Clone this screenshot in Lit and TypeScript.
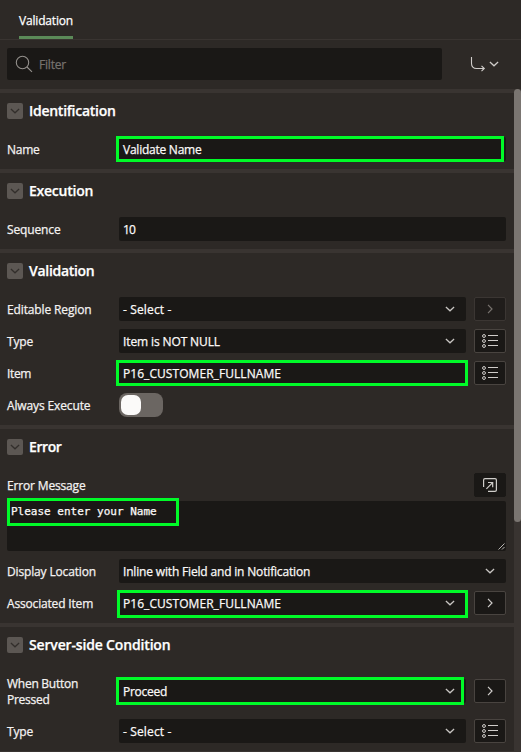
import { LitElement, html, css, svg, nothing } from "lit";
import { customElement, property } from "lit/decorators.js";
import { classMap } from "lit/directives/class-map.js";

type Kind = "input" | "select";
type Action = "go" | "list";

interface Field {
  label: string[];
  value?: string;
  kind?: Kind;
  action?: Action;
  disabled?: boolean;
  toggle?: boolean;
  mark?: string;
}

interface Group {
  title: string;
  fields: Field[];
  message?: { label: string; text: string };
}

/* Tracking per string, in px, so labels keep the widths of the product typeface. */
const TRACKING: Record<string, number> = {
  Validation: -0.18,
  Filter: -0.2,
  Name: -0.27,
  Sequence: -0.14,
  "Editable Region": -0.13,
  Type: -0.17,
  Item: -0.37,
  "Always Execute": -0.13,
  "Error Message": -0.16,
  "Display Location": -0.15,
  "Associated Item": -0.17,
  "When Button": -0.26,
  Pressed: -0.27,
  "Validate Name": -0.24,
  "10": -0.85,
  "- Select -": 0.14,
  "Item is NOT NULL": -0.12,
  P16_CUSTOMER_FULLNAME: 0.06,
  "Inline with Field and in Notification": -0.17,
  Proceed: -0.27,
};
const TITLE_TRACKING: Record<string, number> = {
  Identification: -0.27,
  Execution: -0.25,
  Validation: -0.29,
  Error: -0.4,
  "Server-side Condition": -0.16,
};

const track = (s: string, table = TRACKING) =>
  html`<span style="letter-spacing:${table[s] ?? 0}px">${s}</span>`;

const icon = (w: number, h: number, body: unknown) =>
  html`<svg width=${w} height=${h} viewBox="0 0 ${w} ${h}" fill="none" stroke="currentColor">${body}</svg>`;

const chevronDown = icon(10, 6, svg`<path d="M.9 1 5 4.8 9.1 1" stroke-width="1.25"/>`);
const chevronRight = icon(6, 10, svg`<path d="M1 .9 5 5 1 9.1" stroke-width="1.2"/>`);
const listIcon = icon(16, 14, svg`
  <circle cx="2" cy="2" r="1.45"/><circle cx="2" cy="7" r="1.45"/><circle cx="2" cy="12" r="1.45"/>
  <path d="M6 1.5h10M6 6.5h10M6 11.5h10"/>`);
const searchIcon = icon(18, 18, svg`<circle cx="7.5" cy="7.5" r="6.2" stroke-width="1.1"/><path d="M12 12 17 16.8" stroke-width="1.1"/>`);
const gotoIcon = icon(16, 16, svg`<path d="M1.5 1v6.5c0 3 1.8 5 5 5h7.5M11.5 9.8l2.8 2.7-2.8 2.7" stroke-width="1.1"/>`);
const popIcon = icon(14, 14, svg`<path d="M.6 9V2Q.6 .6 2 .6H12Q13.4 .6 13.4 2V12Q13.4 13.4 12 13.4H5M3.4 10.8 9.6 4.6M5 4.5h4.7v4.7" stroke-width="1.2"/>`);
const grip = icon(7, 7, svg`<path d="M.5 6.5l6-6M4 6.5 6.5 4" stroke-width=".9"/>`);

const GROUPS: Group[] = [
  { title: "Identification", fields: [{ label: ["Name"], value: "Validate Name", mark: "mark-name" }] },
  { title: "Execution", fields: [{ label: ["Sequence"], value: "10" }] },
  {
    title: "Validation",
    fields: [
      { label: ["Editable Region"], value: "- Select -", kind: "select", action: "go", disabled: true },
      { label: ["Type"], value: "Item is NOT NULL", kind: "select", action: "list" },
      { label: ["Item"], value: "P16_CUSTOMER_FULLNAME", action: "list", mark: "mark-item" },
      { label: ["Always Execute"], toggle: true },
    ],
  },
  {
    title: "Error",
    message: { label: "Error Message", text: "Please enter your Name" },
    fields: [
      { label: ["Display Location"], value: "Inline with Field and in Notification", kind: "select" },
      { label: ["Associated Item"], value: "P16_CUSTOMER_FULLNAME", kind: "select", action: "go", mark: "mark-assoc" },
    ],
  },
  {
    title: "Server-side Condition",
    fields: [
      { label: ["When Button", "Pressed"], value: "Proceed", kind: "select", action: "go", mark: "mark-button" },
      { label: ["Type"], value: "- Select -", kind: "select", action: "list" },
    ],
  },
];

const base = css`
  :host { display: block; box-sizing: border-box; }
  *, *::before { box-sizing: border-box; }
  svg { display: block; flex: none; overflow: visible; }
  .mark { position: absolute; border: 3px solid #00fa28; pointer-events: none; }
  .btn {
    width: 32px; height: 24px; flex: none; display: flex; align-items: center; justify-content: center;
    background: #1a1816; border: 1px solid #494440; border-radius: 2px; color: #d0cdca;
  }
`;

@customElement("property-row")
class PropertyRow extends LitElement {
  @property({ attribute: false }) field!: Field;

  static styles = [base, css`
    :host { padding: 4px 8px 4px 7px; }
    .row { display: grid; grid-template-columns: 112px 1fr; align-items: start; }
    .label { padding-top: 5px; line-height: 16px; }
    .label div { height: 16px; }
    .two { height: 40px; }
    .two + .control { margin-top: 8px; }
    .control { display: flex; gap: 8px; position: relative; }
    .box {
      flex: 1; height: 24px; display: flex; align-items: center; justify-content: space-between;
      background: #1a1816; border-radius: 2px; padding: 1px 11px 0 4px; color: #fbf9f8;
    }
    .box svg { color: #c9c6c3; margin-top: -1px; }
    .disabled { color: #78736f; background: #201d1b; border-color: #3b3633; }
    .toggle { width: 44px; height: 24px; border-radius: 8px; background: #6b6662; padding: 2px; }
    .knob { width: 20px; height: 20px; border-radius: 7px; background: #fbfaf9; }
    .mark-name { left: -3px; right: 2px; top: -1px; height: 26px; }
    .mark-item { left: -3px; right: 38px; top: -1px; height: 26px; }
    .mark-assoc { left: -2px; right: 38px; top: -1px; height: 28px; }
    .mark-button { left: -2.6px; right: 42.5px; top: -2px; height: 28px; }
  `];

  render() {
    const f = this.field;
    return html`<div class="row">
      <div class=${classMap({ label: true, two: f.label.length > 1 })}>${f.label.map((l) => html`<div>${track(l)}</div>`)}</div>
      <div class="control">
        ${f.toggle
          ? html`<div class="toggle"><div class="knob"></div></div>`
          : html`<div class="box">${track(f.value ?? "")}${f.kind === "select" ? chevronDown : nothing}</div>`}
        ${f.action
          ? html`<div class=${classMap({ btn: true, disabled: !!f.disabled })}>${f.action === "go" ? chevronRight : listIcon}</div>`
          : nothing}
        ${f.mark ? html`<div class="mark ${f.mark}"></div>` : nothing}
      </div>
    </div>`;
  }
}

@customElement("property-group")
class PropertyGroup extends LitElement {
  @property({ attribute: false }) group!: Group;

  static styles = [base, css`
    :host { border-top: 4px solid #393431; padding-bottom: 4px; }
    .head { height: 40px; padding: 0 7px 4px; display: flex; align-items: center; gap: 6px; }
    .fold {
      width: 16px; height: 16px; border-radius: 2px; background: #5c5753; color: #322e2b;
      display: flex; align-items: center; justify-content: center;
    }
    .title { font-size: 14px; font-weight: 600; line-height: 20px; color: #fff; }
    .message { padding: 4px 8px 4px 7px; }
    .bar { height: 28px; display: flex; justify-content: space-between; }
    .bar-label { padding-top: 5px; line-height: 16px; }
    .bar .btn { border-color: #1a1816; }
    .area {
      position: relative; height: 50px; background: #1a1816; border-radius: 2px; padding: 4px;
      font: 11px/13px "DejaVu Sans Mono", monospace; color: #fbf9f8;
    }
    .grip { position: absolute; right: 1px; bottom: 1px; color: #c9c6c3; }
    .mark-text { left: 0; top: -3px; width: 172px; height: 28px; }
  `];

  render() {
    const { title, message, fields } = this.group;
    return html`
      <div class="head"><div class="fold">${chevronDown}</div><div class="title">${track(title, TITLE_TRACKING)}</div></div>
      ${message
        ? html`<div class="message">
            <div class="bar"><div class="bar-label">${track(message.label)}</div><div class="btn">${popIcon}</div></div>
            <div class="area">${message.text}<div class="grip">${grip}</div><div class="mark mark-text"></div></div>
          </div>`
        : nothing}
      ${fields.map((f) => html`<property-row .field=${f}></property-row>`)}`;
  }
}

@customElement("app-root")
class AppRoot extends LitElement {
  static styles = [base, css`
    :host {
      height: 752px; overflow: hidden; display: flex; flex-direction: column; background: #2d2926; color: #f4f2f1;
      font: 12px/16px "Open Sans", "Noto Sans", sans-serif; -webkit-text-stroke: .25px; white-space: nowrap;
    }
    .tabs { height: 40px; flex: none; border-bottom: 1px solid #393431; padding-left: 19px; display: flex; }
    .tab { width: 54px; height: 39px; padding-top: 13px; border-bottom: 3px solid #5b8a58; color: #fff; }
    .tools { height: 49px; flex: none; padding: 8px 22px 0 7px; display: flex; justify-content: space-between; }
    .filter {
      width: 435px; height: 32px; border-radius: 2px; background: #1a1816; color: #76716d;
      display: flex; align-items: center; gap: 6px; padding: 2px 0 0 8px;
    }
    .filter svg { color: #94908c; margin-top: -3px; }
    .goto { height: 32px; display: flex; align-items: center; gap: 3px; color: #d0cdca; }
    .scroller { flex: 1; min-height: 0; display: grid; grid-template-columns: 1fr 7px; }
    .groups { border-bottom: 1px solid #393431; height: 663px; }
    .rail { background: #393431; }
    .thumb { height: 433px; background: #7a7571; border-radius: 4px; }
  `];

  render() {
    return html`
      <div class="tabs"><div class="tab">${track("Validation")}</div></div>
      <div class="tools">
        <div class="filter">${searchIcon}${track("Filter")}</div>
        <div class="goto">${gotoIcon}${chevronDown}</div>
      </div>
      <div class="scroller">
        <div class="groups">${GROUPS.map((g) => html`<property-group .group=${g}></property-group>`)}</div>
        <div class="rail"><div class="thumb"></div></div>
      </div>`;
  }
}
